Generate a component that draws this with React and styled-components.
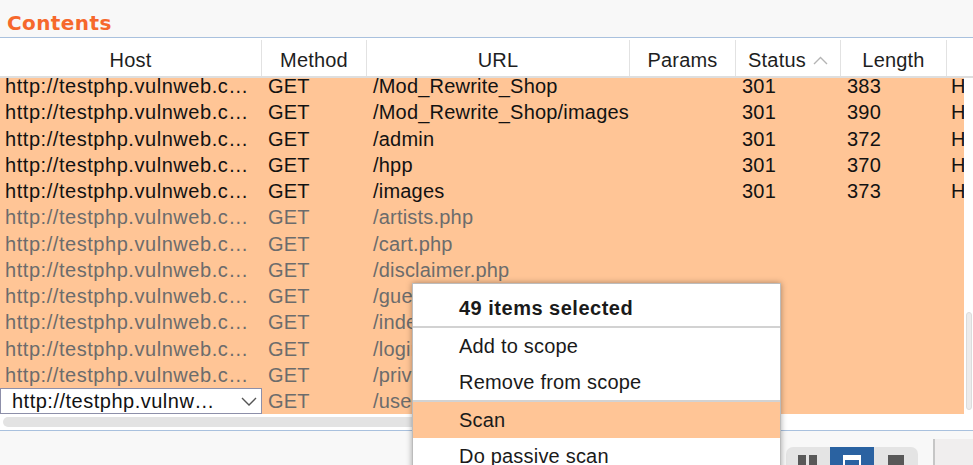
import styled, { createGlobalStyle } from "styled-components";

const GlobalStyle = createGlobalStyle`
  html, body {
    margin: 0;
    padding: 0;
    overflow: hidden;
    background: #ffffff;
  }
  body {
    font-family: "Liberation Sans", Arial, sans-serif;
  }
`;

const ORANGE = "#ffc596";
const COLS = "262px 105px 263px 106px 105px 106px 1fr";

const Page = styled.div`
  position: relative;
  width: 973px;
  height: 465px;
  overflow: hidden;
  display: flex;
  flex-direction: column;

  > * {
    flex-shrink: 0;
  }
`;

const TitleBar = styled.div`
  height: 38px;
  box-sizing: border-box;
  padding: 8px 0 0 7px;
  display: flex;
  align-items: center;
  background: #f8f8f8;
  border-bottom: 1px solid #a9c1de;

  > h1 {
    margin: 0;
    font-family: "DejaVu Sans", sans-serif;
    font-weight: bold;
    font-size: 20px;
    letter-spacing: 0.4px;
    color: #f6682c;
  }
`;

const HeaderRow = styled.div`
  display: grid;
  grid-template-columns: ${COLS};
  height: 40px;
  box-sizing: border-box;
  padding-top: 2px;
  background: #ffffff;
  border-bottom: 2px solid #dedede;
`;

const HeaderCell = styled.div`
  display: flex;
  align-items: center;
  justify-content: center;
  gap: 7px;
  padding-top: 5px;
  font-size: 20px;
  letter-spacing: 0.2px;
  color: #1e1e1e;
  border-right: ${({ $last }) => ($last ? "none" : "1px solid #e2e2e2")};
  white-space: nowrap;
`;

const Body = styled.div`
  display: flex;
  height: 336px;
  overflow: hidden;
`;

const Rows = styled.div`
  width: 964px;
  background: ${ORANGE};
  overflow: hidden;

  > div:first-child {
    margin-top: -5px;
  }
`;

const Row = styled.div`
  display: grid;
  grid-template-columns: ${COLS};
  height: 26.25px;
  line-height: 26.25px;
  font-size: 20px;
  letter-spacing: 0.2px;
  color: ${({ $dim }) => ($dim ? "#6c6c6c" : "#121212")};
`;

const Cell = styled.div`
  padding-left: ${({ $pad }) => $pad ?? 6}px;
  letter-spacing: ${({ $wide }) => ($wide ? "0.55px" : "0.2px")};
  white-space: nowrap;
  overflow: hidden;
`;

const EditBox = styled.div`
  display: flex;
  align-items: center;
  justify-content: space-between;
  box-sizing: border-box;
  height: 26px;
  padding: 0 4px 0 11px;
  background: #ffffff;
  border: 1px solid #8d8fa9;
  color: #111;
  letter-spacing: 0.5px;
  white-space: nowrap;
`;

const VScroll = styled.div`
  width: 9px;
  display: flex;
  flex-direction: column;
  justify-content: flex-end;
  padding-bottom: 4px;
  box-sizing: border-box;
  background: #ffffff;

  > span {
    display: block;
    height: 98px;
    width: 6px;
    margin-left: 2px;
    box-sizing: border-box;
    border-radius: 4px;
    background: #ececec;
    border: 1px solid #dcdcdc;
  }
`;

const HScroll = styled.div`
  height: 17px;
  box-sizing: border-box;
  padding: 3px 0 4px 3px;
  background: #ffffff;
  border-bottom: 1px solid #a9c1de;

  > span {
    display: block;
    width: 720px;
    height: 10px;
    border-radius: 5px;
    background: #e3e3e3;
  }
`;

const Footer = styled.div`
  flex: 1 1 auto;
  min-height: 0;
  overflow: hidden;
  display: flex;
  align-items: flex-start;
  background: #f8f8f8;
`;

const Segmented = styled.div`
  flex-shrink: 0;
  margin: 16px 0 0 auto;
  display: flex;
  width: 132px;
  height: 30px;
  border-radius: 7px;
  background: #e4e4e4;
  overflow: hidden;
`;

const Segment = styled.div`
  width: 44px;
  display: flex;
  justify-content: center;
  padding-top: 8px;
  box-sizing: border-box;
  background: ${({ $active }) => ($active ? "#2a62a1" : "transparent")};
`;

const Divider = styled.div`
  align-self: stretch;
  width: 2px;
  margin: 8px 0 0 15px;
  background: #c6c6c6;
`;

const SidePanel = styled.div`
  align-self: stretch;
  width: 38px;
  margin-top: 8px;
  background: #f0eeee;
`;

const Menu = styled.div`
  position: absolute;
  left: 412px;
  top: 283px;
  width: 367px;
  padding-top: 6px;
  background: #ffffff;
  border: 1px solid #bcbcbc;
  box-shadow: 0 0 6px rgba(0, 0, 0, 0.35);
  font-size: 20px;
  color: #1a1a1a;
`;

const MenuItem = styled.div`
  height: 36px;
  line-height: 36px;
  padding-left: 46px;
  font-weight: ${({ $title }) => ($title ? "bold" : "normal")};
  letter-spacing: ${({ $title }) => ($title ? "0.5px" : "0.2px")};
  background: ${({ $active }) => ($active ? ORANGE : "transparent")};
  white-space: nowrap;
`;

const MenuSep = styled.div`
  height: 2px;
  background: #d2d2d2;
`;

const HOST = "http://testphp.vulnweb.c\u2026";

const rows = [
  { url: "/Mod_Rewrite_Shop", status: "301", length: "383" },
  { url: "/Mod_Rewrite_Shop/images", status: "301", length: "390" },
  { url: "/admin", status: "301", length: "372" },
  { url: "/hpp", status: "301", length: "370" },
  { url: "/images", status: "301", length: "373" },
  { url: "/artists.php", dim: true },
  { url: "/cart.php", dim: true },
  { url: "/disclaimer.php", dim: true },
  { url: "/guestbook.php", dim: true },
  { url: "/index.php", dim: true },
  { url: "/login.php", dim: true },
  { url: "/privacy.php", dim: true },
  { url: "/userinfo.php", dim: true, editing: true },
];

const SortUp = () => (
  <svg width="15" height="9" viewBox="0 0 15 9">
    <polyline points="1,8 7.5,1.5 14,8" fill="none" stroke="#b4b4b4" strokeWidth="1.4" />
  </svg>
);

const ChevronDown = () => (
  <svg width="16" height="9" viewBox="0 0 16 9">
    <polyline points="1,1 8,8 15,1" fill="none" stroke="#555" strokeWidth="1.4" />
  </svg>
);

const App = () => {
  return (
    <Page>
      <GlobalStyle />
      <TitleBar>
        <h1>Contents</h1>
      </TitleBar>
      <HeaderRow>
        <HeaderCell>Host</HeaderCell>
        <HeaderCell>Method</HeaderCell>
        <HeaderCell>URL</HeaderCell>
        <HeaderCell>Params</HeaderCell>
        <HeaderCell>
          Status <SortUp />
        </HeaderCell>
        <HeaderCell>Length</HeaderCell>
        <HeaderCell $last />
      </HeaderRow>
      <Body>
        <Rows>
          {rows.map((r) => (
            <Row key={r.url} $dim={r.dim}>
              {r.editing ? (
                <EditBox>
                  <span>http://testphp.vulnw{"\u2026"}</span>
                  <ChevronDown />
                </EditBox>
              ) : (
                <Cell $pad={5} $wide>{HOST}</Cell>
              )}
              <Cell>GET</Cell>
              <Cell>{r.url}</Cell>
              <Cell />
              <Cell>{r.status}</Cell>
              <Cell>{r.length}</Cell>
              <Cell $pad={4}>{r.dim ? "" : "HTTP"}</Cell>
            </Row>
          ))}
        </Rows>
        <VScroll>
          <span />
        </VScroll>
      </Body>
      <HScroll>
        <span />
      </HScroll>
      <Footer>
        <Segmented>
          <Segment>
            <svg width="20" height="14" viewBox="0 0 20 14">
              <rect x="0" y="0" width="8" height="14" fill="#585858" />
              <rect x="11" y="0" width="8" height="14" fill="#585858" />
            </svg>
          </Segment>
          <Segment $active>
            <svg width="18" height="14" viewBox="0 0 18 14">
              <rect x="1" y="1" width="16" height="13" fill="none" stroke="#ffffff" strokeWidth="2" />
              <rect x="1" y="1" width="16" height="4" fill="#ffffff" />
            </svg>
          </Segment>
          <Segment>
            <svg width="16" height="14" viewBox="0 0 16 14">
              <rect x="0" y="0" width="16" height="14" fill="#585858" />
            </svg>
          </Segment>
        </Segmented>
        <Divider />
        <SidePanel />
      </Footer>
      <Menu>
        <MenuItem $title>49 items selected</MenuItem>
        <MenuSep />
        <MenuItem>Add to scope</MenuItem>
        <MenuItem>Remove from scope</MenuItem>
        <MenuSep />
        <MenuItem $active>Scan</MenuItem>
        <MenuItem>Do passive scan</MenuItem>
      </Menu>
    </Page>
  );
};

export default App;
